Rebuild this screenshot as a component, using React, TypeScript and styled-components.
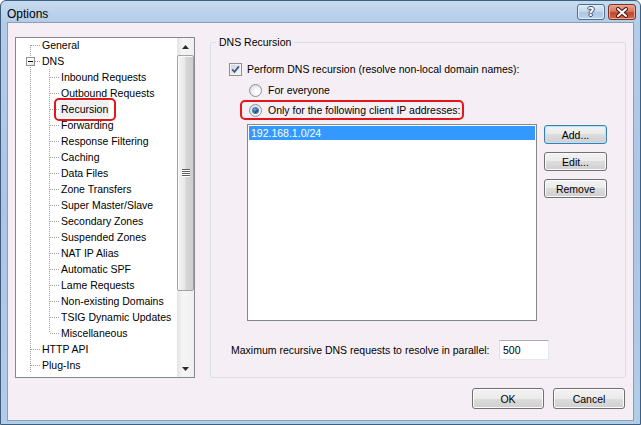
import React from "react";
import styled, { createGlobalStyle, css } from "styled-components";

const GlobalStyle = createGlobalStyle`
  html, body {
    margin: 0;
    padding: 0;
    background: #ffffff;
  }
  body {
    font-family: "Liberation Sans", Arial, sans-serif;
    font-size: 10.5px;
    color: #000000;
  }
`;

const dotsV = css`
  background-image: linear-gradient(to bottom, #a0a0a0 1px, transparent 1px);
  background-size: 1px 2px;
`;

const dotsH = css`
  background-image: linear-gradient(to right, #a0a0a0 1px, transparent 1px);
  background-size: 2px 1px;
`;

const Window = styled.div`
  width: 641px;
  height: 425px;
  box-sizing: border-box;
  display: flex;
  flex-direction: column;
  border: 1px solid #3f5d7e;
  border-radius: 6px 6px 0 0;
  padding: 0 6px 3px;
  background: linear-gradient(
    to bottom,
    #c6dbef 0,
    #b3cce8 21px,
    #aac6e5 50%,
    #b2cde9 100%
  );
  overflow: hidden;
`;

const TitleBar = styled.div`
  height: 21px;
  display: flex;
  align-items: flex-start;
  flex-shrink: 0;
`;

const Title = styled.div`
  flex: 1;
  font-size: 12px;
  line-height: 14px;
  margin-top: 6px;
`;

const CaptionButtons = styled.div`
  display: flex;
  gap: 3px;
  margin: 3px -2px 0 0;
`;

const CaptionButton = styled.div<{ $close?: boolean }>`
  width: 28px;
  height: 16px;
  box-sizing: border-box;
  border-radius: 3px;
  display: flex;
  align-items: center;
  justify-content: center;
  border: 1px solid ${(p) => (p.$close ? "#7b2f22" : "#4f6d93")};
  box-shadow: inset 0 0 0 1px ${(p) => (p.$close ? "#e9a898" : "#e4eef9")};
  background: ${(p) =>
    p.$close
      ? "linear-gradient(to bottom, #e4a18f 0%, #d67763 45%, #c3432c 55%, #cf6a4c 100%)"
      : "linear-gradient(to bottom, #dfeaf6 0%, #c6d8ec 45%, #adc6e3 55%, #bcd3ec 100%)"};
  font-family: "DejaVu Sans", sans-serif;
  font-weight: bold;
  font-size: 12px;
  line-height: 14px;
  color: #ffffff;
  text-shadow: 1px 0 #3a4e6a, -1px 0 #3a4e6a, 0 1px #3a4e6a, 0 -1px #3a4e6a;
`;

const Client = styled.div`
  flex: 1;
  display: flex;
  flex-direction: column;
  border: 1px solid #8b9eb4;
  background: #f5eff5;
  padding: 14px 7px 11px;
  min-height: 0;
`;

const Main = styled.div`
  display: flex;
  gap: 15px;
  height: 341px;
`;

const Tree = styled.div`
  width: 180px;
  box-sizing: border-box;
  border: 1px solid #828790;
  background: #ffffff;
  display: flex;
  flex-shrink: 0;
`;

const TreeBody = styled.div`
  flex: 1;
  padding-left: 5px;
  overflow: hidden;

  & > :first-child {
    margin-top: -1px;
  }
`;

const Row = styled.div`
  display: flex;
  height: 16px;
  align-items: center;
  white-space: nowrap;
`;

type VLine = "full" | "top" | "bottom" | "none";

const Cell = styled.span<{ $v: VLine; $h?: boolean }>`
  position: relative;
  width: 19px;
  height: 16px;
  flex-shrink: 0;

  &::before {
    content: "";
    position: absolute;
    left: 9px;
    width: 1px;
    top: ${(p) => (p.$v === "bottom" ? "8px" : "0")};
    height: ${(p) => (p.$v === "full" ? "16px" : p.$v === "none" ? "0" : "8px")};
    ${dotsV};
  }

  &::after {
    content: "";
    position: absolute;
    top: 8px;
    left: 10px;
    width: ${(p) => (p.$h ? "9px" : "0")};
    height: 1px;
    ${dotsH};
  }
`;

const Expander = styled.span`
  position: absolute;
  z-index: 1;
  left: 5px;
  top: 4px;
  width: 9px;
  height: 9px;
  box-sizing: border-box;
  border: 1px solid #919191;
  background: linear-gradient(135deg, #ffffff 40%, #dcdcdc);

  &::after {
    content: "";
    position: absolute;
    left: 1px;
    top: 3px;
    width: 5px;
    height: 1px;
    background: #000000;
  }
`;

const NodeLabel = styled.span<{ $marked?: boolean }>`
  position: relative;
  line-height: 16px;
  padding: 0 1px;
  margin-left: 1px;
  background: ${(p) => (p.$marked ? "#f0f0f0" : "transparent")};

  ${(p) =>
    p.$marked &&
    css`
      &::after {
        content: "";
        position: absolute;
        left: -6px;
        right: -7px;
        top: -3px;
        bottom: -4px;
        border: 2px solid #e3161b;
        border-radius: 5px;
      }
    `}
`;

const ScrollBar = styled.div`
  width: 17px;
  display: flex;
  flex-direction: column;
  flex-shrink: 0;
  background: linear-gradient(to right, #e4e4e4, #f6f6f6 35%, #efefef);
`;

const ArrowButton = styled.div`
  height: 17px;
  display: flex;
  align-items: center;
  justify-content: center;
  flex-shrink: 0;
`;

const Track = styled.div`
  flex: 1;
  display: flex;
  flex-direction: column;
`;

const Thumb = styled.div`
  height: 236px;
  box-sizing: border-box;
  border: 1px solid #a2a2a2;
  border-radius: 2px;
  box-shadow: inset 1px 1px 0 #fbfbfb;
  background: linear-gradient(
    to right,
    #f3f3f3 0%,
    #e8e8e8 45%,
    #d6d6d6 55%,
    #cdcdcd 100%
  );
  display: flex;
  align-items: center;
  justify-content: center;
`;

const Grip = styled.div`
  width: 8px;
  height: 8px;
  background-image: linear-gradient(to bottom, #5c5c5c 1px, #ffffff 1px);
  background-size: 8px 2px;
`;

const Group = styled.fieldset`
  flex: 1;
  margin: -1px 0 0;
  padding: 0;
  min-width: 0;
  border: 1px solid #d5dfe5;
  border-radius: 3px;
`;

const Legend = styled.legend`
  margin-left: 5px;
  padding: 0 3px;
  line-height: 12px;
`;

const GroupInner = styled.div`
  display: flex;
  flex-direction: column;
  padding: 13px 0 0 18px;
`;

const OptionRow = styled.div<{ $indent?: number; $gap?: number }>`
  display: flex;
  align-items: center;
  height: 16px;
  margin-left: ${(p) => p.$indent ?? 0}px;
  margin-top: ${(p) => p.$gap ?? 0}px;
  white-space: nowrap;
`;

const Highlight = styled.span`
  position: relative;
  display: flex;
  align-items: center;

  &::after {
    content: "";
    position: absolute;
    left: -9px;
    right: -4px;
    top: -4px;
    bottom: -3px;
    border: 2px solid #e3161b;
    border-radius: 5px;
  }
`;

const CheckBox = styled.span`
  width: 13px;
  height: 13px;
  box-sizing: border-box;
  border: 1px solid #8e8f8f;
  background: #f4f4f4;
  padding: 1px;
  margin-right: 5px;
  flex-shrink: 0;

  & > span {
    display: block;
    width: 9px;
    height: 9px;
    background: linear-gradient(135deg, #cfd2d8, #f8f8f8);
  }
`;

const Radio = styled.span<{ $on?: boolean }>`
  width: 13px;
  height: 13px;
  box-sizing: border-box;
  border-radius: 50%;
  border: 1px solid #8e8f8f;
  background: radial-gradient(circle at 65% 65%, #ffffff 20%, #d5d7db 90%);
  margin-right: 6px;
  flex-shrink: 0;
  display: flex;
  align-items: center;
  justify-content: center;

  &::after {
    content: "";
    width: 5px;
    height: 5px;
    border-radius: 50%;
    display: ${(p) => (p.$on ? "block" : "none")};
    background: radial-gradient(circle at 40% 35%, #7fb6e8, #1c4f8e 55%, #0f2a4f);
    box-shadow: 0 0 0 1px #4a7fb8;
  }
`;

const ListRow = styled.div`
  display: flex;
  gap: 7px;
  margin: 6px 0 0 18px;
`;

const ListBox = styled.div`
  width: 290px;
  height: 197px;
  box-sizing: border-box;
  border: 1px solid #828790;
  background: #ffffff;
  padding: 1px;
`;

const ListItem = styled.div<{ $selected?: boolean }>`
  height: 14px;
  line-height: 14px;
  padding-left: 2px;
  background: ${(p) => (p.$selected ? "#3399ff" : "transparent")};
  color: ${(p) => (p.$selected ? "#ffffff" : "#000000")};
`;

const SideButtons = styled.div`
  display: flex;
  flex-direction: column;
  gap: 8px;
  padding-top: 1px;
`;

const Button = styled.button<{ $w: number; $h: number; $default?: boolean }>`
  width: ${(p) => p.$w}px;
  height: ${(p) => p.$h}px;
  box-sizing: border-box;
  padding: 0;
  font-family: inherit;
  font-size: 10.5px;
  color: #000000;
  border-radius: 3px;
  border: 1px solid ${(p) => (p.$default ? "#3c7fb1" : "#707070")};
  box-shadow: inset 0 0 0 1px ${(p) => (p.$default ? "#b6e2fb" : "#fbfbfb")};
  background: linear-gradient(
    to bottom,
    #f2f2f2 0%,
    #ebebeb 50%,
    #dddddd 50%,
    #cfcfcf 100%
  );
`;

const MaxRow = styled.div`
  display: flex;
  align-items: center;
  margin: 19px 0 0 2px;
`;

const MaxLabel = styled.span`
  width: 268px;
  white-space: nowrap;
`;

const NumberInput = styled.div`
  width: 50px;
  height: 20px;
  box-sizing: border-box;
  border: 1px solid #e3e9ef;
  border-top-color: #abadb3;
  border-left-color: #dbdfe6;
  background: #ffffff;
  padding-left: 3px;
  line-height: 18px;
`;

const Footer = styled.div`
  display: flex;
  justify-content: flex-end;
  gap: 9px;
  margin-top: 10px;
  padding-right: 1px;
`;

type Node = { label: string; cells: { v: VLine; h?: boolean; box?: boolean }[]; marked?: boolean };

const child = (label: string, last = false, marked = false): Node => ({
  label,
  marked,
  cells: [{ v: "full" }, { v: last ? "top" : "full", h: true }],
});

const nodes: Node[] = [
  { label: "General", cells: [{ v: "bottom", h: true }] },
  { label: "DNS", cells: [{ v: "full", h: true, box: true }] },
  child("Inbound Requests"),
  child("Outbound Requests"),
  child("Recursion", false, true),
  child("Forwarding"),
  child("Response Filtering"),
  child("Caching"),
  child("Data Files"),
  child("Zone Transfers"),
  child("Super Master/Slave"),
  child("Secondary Zones"),
  child("Suspended Zones"),
  child("NAT IP Alias"),
  child("Automatic SPF"),
  child("Lame Requests"),
  child("Non-existing Domains"),
  child("TSIG Dynamic Updates"),
  child("Miscellaneous", true),
  { label: "HTTP API", cells: [{ v: "full", h: true }] },
  { label: "Plug-Ins", cells: [{ v: "full", h: true }] },
];

const CheckMark = () => (
  <svg width="9" height="9" viewBox="0 0 9 9" style={{ display: "block" }}>
    <path d="M1.2 4.4 L3.5 6.9 L7.9 1.4" fill="none" stroke="#3d5a96" strokeWidth="1.8" />
  </svg>
);

const CloseGlyph = () => (
  <svg width="14" height="11" viewBox="0 0 14 11">
    <path d="M3 2 L11 9 M11 2 L3 9" stroke="#4a1810" strokeWidth="4" strokeLinecap="round" />
    <path d="M3 2 L11 9 M11 2 L3 9" stroke="#ffffff" strokeWidth="2" strokeLinecap="round" />
  </svg>
);

const Arrow = ({ up }: { up?: boolean }) => (
  <svg width="7" height="4" viewBox="0 0 7 4">
    <path d={up ? "M0 4 L3.5 0 L7 4 Z" : "M0 0 L3.5 4 L7 0 Z"} fill="#2b2b2b" />
  </svg>
);

const App: React.FC = () => (
  <>
    <GlobalStyle />
    <Window>
      <TitleBar>
        <Title>Options</Title>
        <CaptionButtons>
          <CaptionButton>?</CaptionButton>
          <CaptionButton $close>
            <CloseGlyph />
          </CaptionButton>
        </CaptionButtons>
      </TitleBar>
      <Client>
        <Main>
          <Tree>
            <TreeBody>
              {nodes.map((node) => (
                <Row key={node.label}>
                  {node.cells.map((c, i) => (
                    <Cell key={i} $v={c.v} $h={c.h}>
                      {c.box && <Expander />}
                    </Cell>
                  ))}
                  <NodeLabel $marked={node.marked}>{node.label}</NodeLabel>
                </Row>
              ))}
            </TreeBody>
            <ScrollBar>
              <ArrowButton>
                <Arrow up />
              </ArrowButton>
              <Track>
                <Thumb>
                  <Grip />
                </Thumb>
              </Track>
              <ArrowButton>
                <Arrow />
              </ArrowButton>
            </ScrollBar>
          </Tree>
          <Group>
            <Legend>DNS Recursion</Legend>
            <GroupInner>
              <OptionRow>
                <CheckBox>
                  <span>
                    <CheckMark />
                  </span>
                </CheckBox>
                Perform DNS recursion (resolve non-local domain names):
              </OptionRow>
              <OptionRow $indent={20} $gap={5}>
                <Radio />
                For everyone
              </OptionRow>
              <OptionRow $indent={20} $gap={4}>
                <Highlight>
                  <Radio $on />
                  Only for the following client IP addresses:
                </Highlight>
              </OptionRow>
              <ListRow>
                <ListBox>
                  <ListItem $selected>192.168.1.0/24</ListItem>
                </ListBox>
                <SideButtons>
                  <Button $w={63} $h={19} $default>
                    Add...
                  </Button>
                  <Button $w={63} $h={19}>
                    Edit...
                  </Button>
                  <Button $w={63} $h={19}>
                    Remove
                  </Button>
                </SideButtons>
              </ListRow>
              <MaxRow>
                <MaxLabel>Maximum recursive DNS requests to resolve in parallel:</MaxLabel>
                <NumberInput>500</NumberInput>
              </MaxRow>
            </GroupInner>
          </Group>
        </Main>
        <Footer>
          <Button $w={72} $h={21}>
            OK
          </Button>
          <Button $w={72} $h={21}>
            Cancel
          </Button>
        </Footer>
      </Client>
    </Window>
  </>
);

export default App;
